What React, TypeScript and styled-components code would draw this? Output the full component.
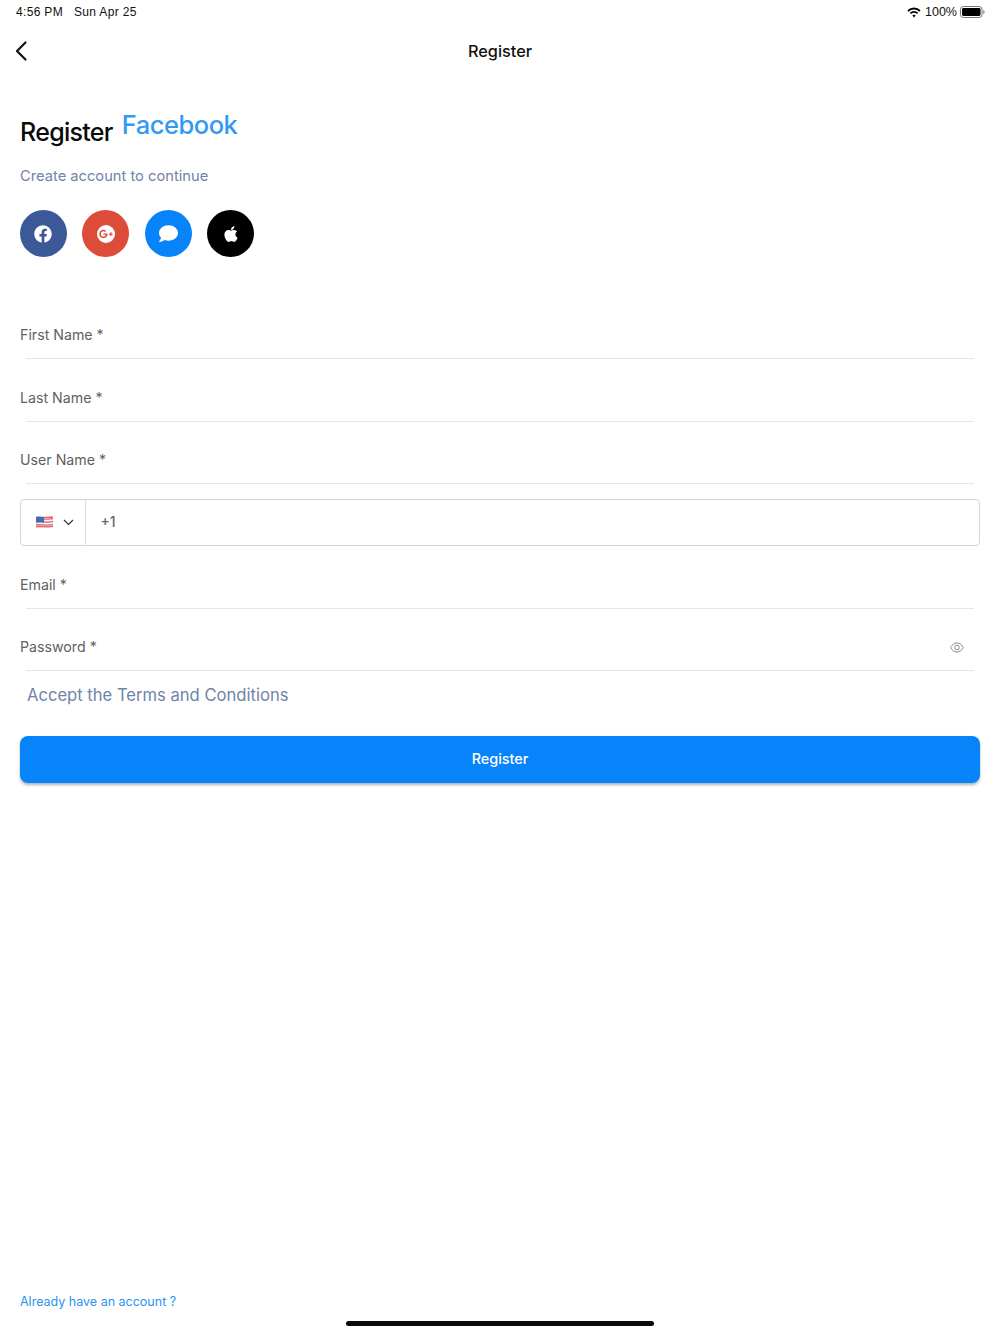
import React from "react";
import styled, { createGlobalStyle } from "styled-components";
import { FaFacebook, FaGooglePlusG, FaComment, FaApple } from "react-icons/fa";

const Global = createGlobalStyle`
  html, body { margin: 0; padding: 0; background: #fff; }
  body { font-family: "Inter", "Liberation Sans", sans-serif; }
`;
const Page = styled.div`
  width: 1000px; height: 1334px; display: flex; flex-direction: column; overflow: hidden; background: #fff;
`;
const StatusBar = styled.div`
  height: 24px; flex: none; display: flex; align-items: center; justify-content: space-between;
  padding: 0 15px 0 16px; font-family: "Liberation Sans", sans-serif; font-size: 12px; color: #111;
`;
const StatusLeft = styled.div`display: flex; gap: 11px; letter-spacing: .33px;`;
const StatusRight = styled.div`display: flex; align-items: center; gap: 4px; font-size: 12.5px;`;
const BatteryIcon = styled.svg`margin-left: -1px;`;
const NavBar = styled.div`
  height: 54px; flex: none; display: flex; align-items: center; justify-content: center; position: relative;
`;
const BackButton = styled.button`
  position: absolute; left: 13px; top: 15px; padding: 0; border: 0; background: none; display: flex;
`;
const NavTitle = styled.div`font-size: 16.3px; font-weight: 500; color: #111; margin-top: -1px;`;
const Content = styled.div`
  flex: 1; display: flex; flex-direction: column; padding: 0 20px;
`;
const HeadingRow = styled.div`
  display: flex; align-items: flex-start; gap: 9px; height: 60px; padding-top: 30px;
`;
const Heading = styled.div`
  font-size: 25px; font-weight: 500; color: #0a0a0a; line-height: 32px; margin-top: 8px; letter-spacing: -.7px;
`;
const Brand = styled.div`
  font-size: 25.5px; font-weight: 500; color: #3399f3; line-height: 32px; margin-top: 1px; letter-spacing: -.5px;
`;
const Subtitle = styled.div`
  font-size: 14.7px; color: #6f84a8; line-height: 20px; margin-top: -2px;
`;
const Socials = styled.div`display: flex; gap: 15.5px; margin: 24px 0 0 -.5px;`;
const Social = styled.div<{ $bg: string }>`
  width: 47px; height: 47px; border-radius: 50%; background: ${p => p.$bg}; color: #fff;
  display: flex; align-items: center; justify-content: center;
`;
const GoogleDisc = styled.div`
  width: 18px; height: 18px; border-radius: 50%; background: #fff; color: #dd4b39;
  display: flex; align-items: center; justify-content: center;
`;
const Fields = styled.div`display: flex; flex-direction: column; margin-top: 53px;`;
const Field = styled.div`
  height: 62.5px; display: flex; flex-direction: column; position: relative;
`;
const FieldRow = styled.div`
  height: 46px; flex: none; display: flex; align-items: flex-end; justify-content: space-between; padding-bottom: 11px; box-sizing: border-box;
`;
const Label = styled.div`font-size: 14.2px; color: #5f5f5f; line-height: 20px;`;
const Underline = styled.div`height: 1px; background: #e3e7ef; margin: 2px 6px 0;`;
const Eye = styled.svg`margin: 0 16px 4px 0;`;
const PhoneBox = styled.div`
  height: 47px; margin-top: 1px; margin-bottom: 14px; box-sizing: border-box; border: 1px solid #cdd5e1; border-radius: 4px; display: flex; align-items: center;
`;
const CountrySelect = styled.div`
  width: 64.5px; height: 100%; flex: none; box-sizing: border-box; border-right: 1px solid #d9dfe9;
  display: flex; align-items: center; gap: 10px; padding-left: 15px;
`;
const PhoneValue = styled.div`font-size: 14px; font-weight: 500; color: #666; padding-left: 15px; margin-top: -1px;`;
const Terms = styled.div`
  font-size: 16.6px; color: #6f84a8; line-height: 24px; margin: -2px 0 0 7px;
`;
const RegisterButton = styled.button`
  height: 47px; margin-top: 29px; border: 0; border-radius: 8px; background: #0784f9; color: #fff;
  font-family: inherit; font-size: 14.4px; font-weight: 500; box-shadow: 0 2px 3px rgba(0,0,0,.3); padding: 0 0 1px;
`;
const Footer = styled.div`
  margin-top: auto; font-size: 12.5px; color: #2b93f2; line-height: 18px; margin-bottom: 10px;
`;
const HomeBarRow = styled.div`flex: none; height: 13px; display: flex; justify-content: center;`;
const HomeBar = styled.div`width: 308px; height: 5px; border-radius: 3px; background: #0a0a0a;`;

const Wifi = () => (
  <svg width="14" height="11" viewBox="0 0 14 11" fill="none" stroke="#000" strokeWidth="1.9">
    <path d="M1 4a8.6 8.6 0 0 1 12 0" />
    <path d="M3.4 6.4a5.2 5.2 0 0 1 7.2 0" />
    <path d="M7 10.6 5.4 8.6a2.3 2.3 0 0 1 3.2 0z" fill="#000" stroke="none" />
  </svg>
);
const Battery = () => (
  <BatteryIcon width="25" height="12" viewBox="0 0 25 12">
    <rect x=".5" y=".5" width="21.5" height="11" rx="2.8" fill="none" stroke="#777" />
    <rect x="2" y="2" width="18.5" height="8" rx="1.4" fill="#000" />
    <path d="M23.3 4v4c.8-.3 1.2-1 1.2-2s-.4-1.7-1.2-2z" fill="#777" />
  </BatteryIcon>
);
const Flag = () => (
  <svg width="17" height="12" viewBox="0 0 17 12">
    <path d="M0 1.2c5-1.4 11 1 17-.6v10.600c-6 1.400-12-1-17 .4z" fill="#f4f4f6" />
    <path d="M0 3c5-1 11 1 17-.4M0 6c5-1 11 1 17-.4M0 9c5-1 11 1 17-.4M0 10.800c5-1 11 1 17-.4M0 1.400c5-1 11 1 17-.4" stroke="#e0616a" strokeWidth="1.300" fill="none" />
    <path d="M0 1.200c2.600-.6 5-.3 8 .1v5.400c-3-.4-5.500-.6-8-.2z" fill="#3d6fb8" />
  </svg>
);
const Fld = ({ label, eye }: { label: string; eye?: boolean }) => (
  <Field>
    <FieldRow>
      <Label>{label}</Label>
      {eye && (
        <Eye width="14" height="11" viewBox="0 0 14 11" fill="none" stroke="#8a8a8a" strokeWidth="1">
          <path d="M.7 5.500C2.200 2.500 4.400 1 7 1s4.800 1.500 6.300 4.500C11.800 8.500 9.600 10 7 10S2.200 8.500.7 5.500z" />
          <circle cx="7" cy="5.500" r="2.300" />
        </Eye>
      )}
    </FieldRow>
    <Underline />
  </Field>
);

export default function App() {
  return (
    <Page>
      <Global />
      <StatusBar>
        <StatusLeft><span>4:56 PM</span><span>Sun Apr 25</span></StatusLeft>
        <StatusRight><Wifi /><span>100%</span><Battery /></StatusRight>
      </StatusBar>
      <NavBar>
        <BackButton aria-label="Back">
          <svg width="16" height="24" viewBox="0 0 16 24" fill="none" stroke="#111" strokeWidth="2.200" strokeLinecap="round" strokeLinejoin="round">
            <path d="M12.500 3.500 4 12l8.500 8.500" />
          </svg>
        </BackButton>
        <NavTitle>Register</NavTitle>
      </NavBar>
      <Content>
        <HeadingRow>
          <Heading>Register</Heading>
          <Brand>Facebook</Brand>
        </HeadingRow>
        <Subtitle>Create account to continue</Subtitle>
        <Socials>
          <Social $bg="#3b5998"><FaFacebook size={18} /></Social>
          <Social $bg="#dd4b39"><GoogleDisc><FaGooglePlusG size={14} /></GoogleDisc></Social>
          <Social $bg="#0784f9"><FaComment size={19} /></Social>
          <Social $bg="#000"><FaApple size={18} /></Social>
        </Socials>
        <Fields>
          <Fld label="First Name *" />
          <Fld label="Last Name *" />
          <Fld label="User Name *" />
          <PhoneBox>
            <CountrySelect>
              <Flag />
              <svg width="11" height="7" viewBox="0 0 11 7" fill="none" stroke="#333" strokeWidth="1.200"><path d="M1 1l4.500 4.500L10 1" /></svg>
            </CountrySelect>
            <PhoneValue>+1</PhoneValue>
          </PhoneBox>
          <Fld label="Email *" />
          <Fld label="Password *" eye />
        </Fields>
        <Terms>Accept the Terms and Conditions</Terms>
        <RegisterButton>Register</RegisterButton>
        <Footer>Already have an account ?</Footer>
      </Content>
      <HomeBarRow><HomeBar /></HomeBarRow>
    </Page>
  );
}
